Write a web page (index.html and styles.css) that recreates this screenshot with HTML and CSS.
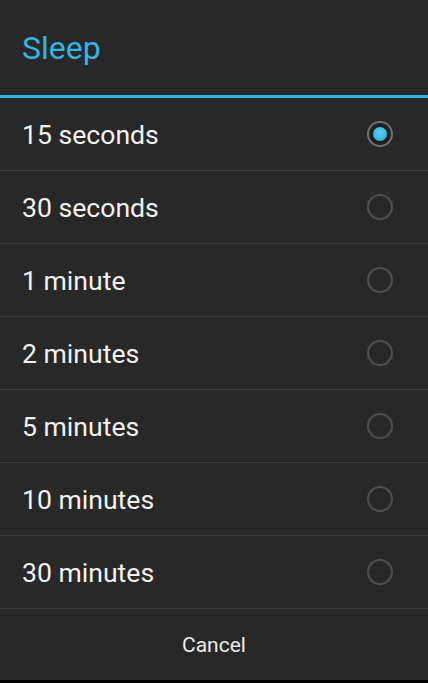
FILE: index.html
```html
<!DOCTYPE html>
<html>
<head>
<meta charset="utf-8">
<link rel="stylesheet" href="styles.css">
</head>
<body>
<div class="dialog">
  <div class="title">Sleep</div>
  <div class="accent"></div>
  <ul class="options">
    <li class="option"><span class="label">15 seconds</span><span class="radio checked"><span class="dot"></span></span></li>
    <li class="option"><span class="label">30 seconds</span><span class="radio"></span></li>
    <li class="option"><span class="label">1 minute</span><span class="radio"></span></li>
    <li class="option"><span class="label">2 minutes</span><span class="radio"></span></li>
    <li class="option"><span class="label">5 minutes</span><span class="radio"></span></li>
    <li class="option"><span class="label">10 minutes</span><span class="radio"></span></li>
    <li class="option"><span class="label">30 minutes</span><span class="radio"></span></li>
  </ul>
  <div class="actions"><span class="cancel">Cancel</span></div>
</div>
<div class="under"></div>
</body>
</html>
```
FILE: styles.css
```css
html, body {
  margin: 0;
  padding: 0;
  background: #000;
  font-family: Roboto, "Noto Sans", "Liberation Sans", sans-serif;
}
.dialog {
  width: 428px;
  background: #282828;
}
.title {
  height: 95px;
  display: flex;
  align-items: center;
  padding-left: 22px;
  box-sizing: border-box;
  color: #33b5e5;
  font-size: 32px;
}
.accent {
  height: 3px;
  background: #33b5e5;
}
.options {
  list-style: none;
  margin: 0;
  padding: 0;
}
.option {
  height: 72px;
  border-bottom: 1px solid #3e3e3e;
  display: flex;
  align-items: center;
  justify-content: space-between;
  padding: 0 35px 0 22px;
}
.label {
  color: #f2f2f2;
  font-size: 26.6px;
}
.radio {
  width: 26px;
  height: 26px;
  box-sizing: border-box;
  border: 2px solid #4f4f4f;
  border-radius: 50%;
  display: flex;
  align-items: center;
  justify-content: center;
}
.radio.checked {
  border-color: #707070;
  background: #1f1f1f;
}
.dot {
  width: 14px;
  height: 14px;
  border-radius: 50%;
  background: radial-gradient(circle at 50% 40%, #5ccbf2 0%, #33b5e5 70%, #2a9bc6 100%);
}
.actions {
  height: 71px;
  display: flex;
  align-items: center;
  justify-content: center;
}
.cancel {
  color: #ececec;
  font-size: 21px;
}
.under {
  height: 3px;
  background: #000;
}
```
